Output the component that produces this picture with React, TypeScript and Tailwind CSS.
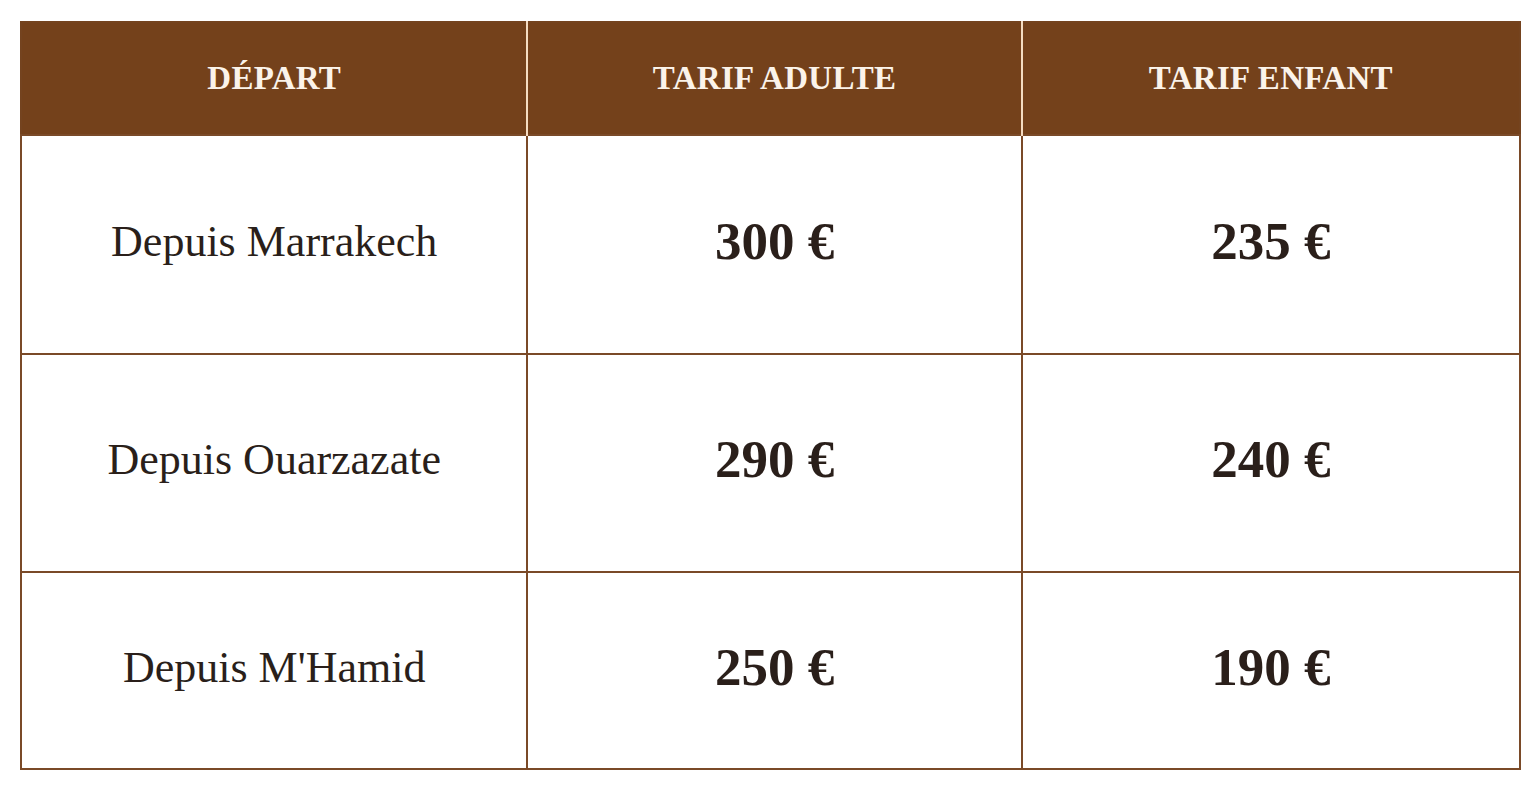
const rows = [
  { from: "Depuis Marrakech", adult: "300 €", child: "235 €", h: "h-[219px]" },
  { from: "Depuis Ouarzazate", adult: "290 €", child: "240 €", h: "h-[218px]" },
  { from: "Depuis M'Hamid", adult: "250 €", child: "190 €", h: "h-[197px]" },
]

export default function App() {
  return (
    <div className="min-h-screen bg-white pt-[21px] pl-[20px] font-['Liberation_Serif',serif]">
      <table className="w-[1501px] border-collapse border-2 border-[#74431f] text-[#2a1f1a]">
        <colgroup>
          <col className="w-[507px]" />
          <col className="w-[495px]" />
          <col className="w-[499px]" />
        </colgroup>
        <thead>
          <tr className="h-[113px] bg-[#74411b] text-[#fbf3ea]">
            <th className="text-[33px] font-bold tracking-[0.3px]">DÉPART</th>
            <th className="border-l-2 border-[#f5dcc2] text-[33px] font-bold tracking-[0.3px]">TARIF ADULTE</th>
            <th className="border-l-2 border-[#f5dcc2] text-[33px] font-bold tracking-[0.3px]">TARIF ENFANT</th>
          </tr>
        </thead>
        <tbody>
          {rows.map((r) => (
            <tr key={r.from} className={r.h}>
              <td className="border-2 border-[#7a4a28] pb-[6px] text-center text-[44px]">{r.from}</td>
              <td className="border-2 border-[#7a4a28] pb-[6px] text-center text-[53px] font-bold">{r.adult}</td>
              <td className="border-2 border-[#7a4a28] pb-[6px] text-center text-[53px] font-bold">{r.child}</td>
            </tr>
          ))}
        </tbody>
      </table>
    </div>
  )
}
